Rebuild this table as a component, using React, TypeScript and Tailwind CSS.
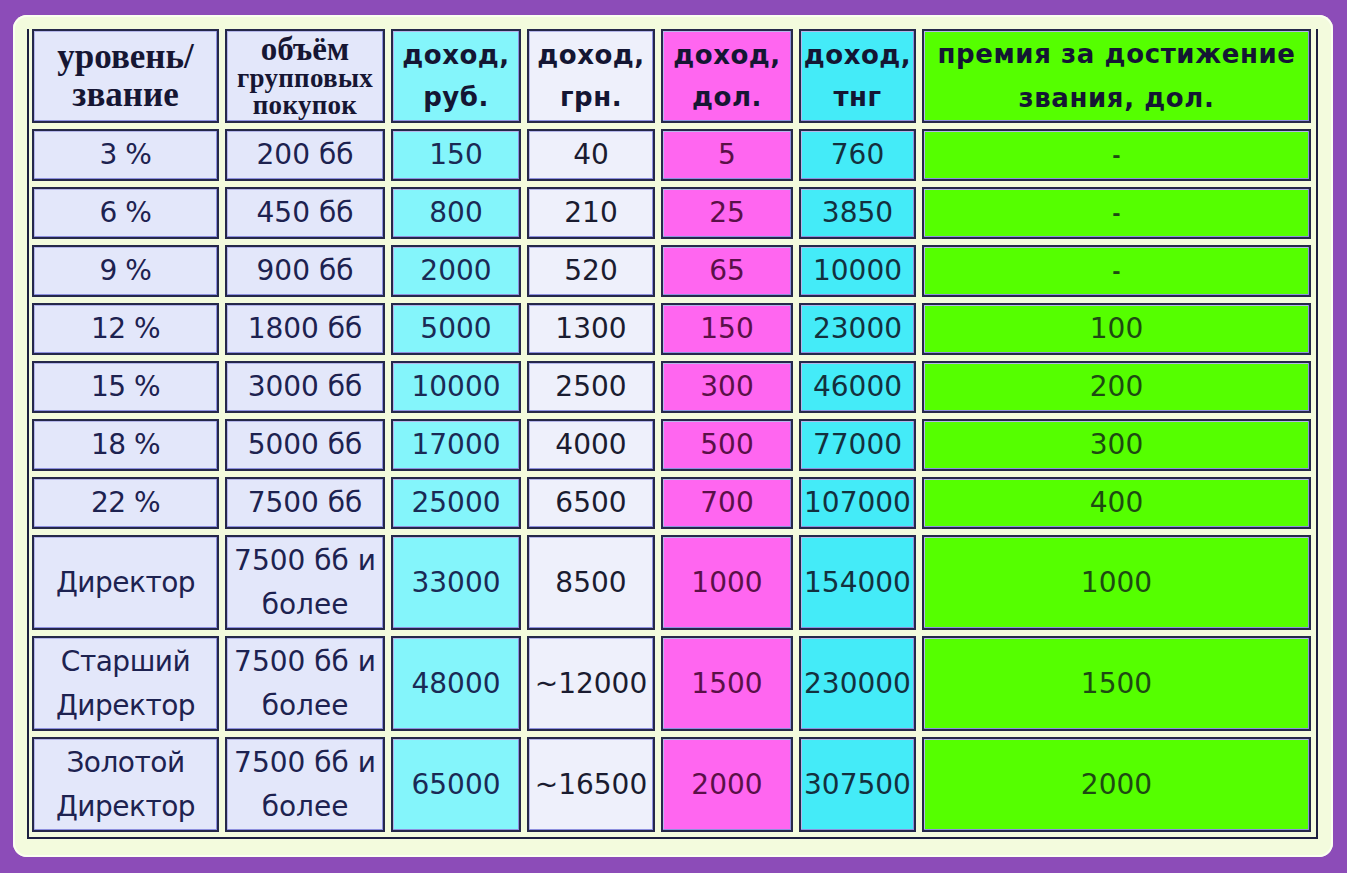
import React from "react";

const cols = [
  { bg: "bg-[#e3e7fa]", text: "text-[#1d2250]" },
  { bg: "bg-[#e3e7fa]", text: "text-[#1d2250]" },
  { bg: "bg-[#84f5fb]", text: "text-[#1a2a55]" },
  { bg: "bg-[#eef0fb]", text: "text-[#1a1c30]" },
  { bg: "bg-[#ff66f0]", text: "text-[#5a1048]" },
  { bg: "bg-[#44ebf8]", text: "text-[#13303e]" },
  { bg: "bg-[#55ff00]", text: "text-[#1d4a12]" },
];

const rows: { h: string; cells: string[][] }[] = [
  { h: "h-[52px]", cells: [["3 %"], ["200 бб"], ["150"], ["40"], ["5"], ["760"], ["-"]] },
  { h: "h-[52px]", cells: [["6 %"], ["450 бб"], ["800"], ["210"], ["25"], ["3850"], ["-"]] },
  { h: "h-[52px]", cells: [["9 %"], ["900 бб"], ["2000"], ["520"], ["65"], ["10000"], ["-"]] },
  { h: "h-[52px]", cells: [["12 %"], ["1800 бб"], ["5000"], ["1300"], ["150"], ["23000"], ["100"]] },
  { h: "h-[52px]", cells: [["15 %"], ["3000 бб"], ["10000"], ["2500"], ["300"], ["46000"], ["200"]] },
  { h: "h-[52px]", cells: [["18 %"], ["5000 бб"], ["17000"], ["4000"], ["500"], ["77000"], ["300"]] },
  { h: "h-[52px]", cells: [["22 %"], ["7500 бб"], ["25000"], ["6500"], ["700"], ["107000"], ["400"]] },
  { h: "h-[95px]", cells: [["Директор"], ["7500 бб и", "более"], ["33000"], ["8500"], ["1000"], ["154000"], ["1000"]] },
  { h: "h-[95px]", cells: [["Старший", "Директор"], ["7500 бб и", "более"], ["48000"], ["~12000"], ["1500"], ["230000"], ["1500"]] },
  { h: "h-[95px]", cells: [["Золотой", "Директор"], ["7500 бб и", "более"], ["65000"], ["~16500"], ["2000"], ["307500"], ["2000"]] },
];

const cellBase =
  "border-2 border-[#25284a] shadow-[inset_-1px_-1px_0_#8d90de,inset_1px_1px_0_#b4b6ea] flex flex-col items-center justify-center text-center";

const sans = { fontFamily: "'DejaVu Sans', Verdana, sans-serif" };
const serif = { fontFamily: "'Liberation Serif', 'Times New Roman', serif" };

function SansHead({ lines, i }: { lines: string[]; i: number }) {
  return (
    <div className={`${cellBase} ${cols[i].bg} h-[94px] text-[#141633] font-bold text-[26px] leading-[42px] tracking-[0.5px]`} style={sans}>
      {lines.map((l, k) => (
        <div key={k}>{l}</div>
      ))}
    </div>
  );
}

export default function App() {
  return (
    <div className="w-[1347px] h-[873px] bg-[#8c4cb8] pt-[15px] pl-[13px]">
      <div className="w-[1320px] h-[842px] bg-[#f3fbdd] rounded-[14px] pt-[14px] pl-[14px] pr-[15px] shadow-[inset_0_0_0_2px_#fbfff0]">
        <div className="border-l-2 border-r-2 border-b-2 border-[#1d2040] pl-[3px] pr-[4px] pb-[5px]">
          <div className="grid grid-cols-[187px_160px_130px_128px_132px_117px_389px] gap-x-[6px] gap-y-[6px]">
            {/* header */}
            <div className={`${cellBase} ${cols[0].bg} h-[94px] text-[#161633] font-bold text-[35px] leading-[38px]`} style={serif}>
              <div>уровень/</div>
              <div>звание</div>
            </div>
            <div className={`${cellBase} ${cols[1].bg} h-[94px] text-[#161633] font-bold`} style={serif}>
              <div className="text-[33px] leading-[32px]">объём</div>
              <div className="text-[27px] leading-[27px] tracking-[0.3px]">групповых</div>
              <div className="text-[27px] leading-[27px] tracking-[0.3px]">покупок</div>
            </div>
            <SansHead lines={["доход,", "руб."]} i={2} />
            <SansHead lines={["доход,", "грн."]} i={3} />
            <SansHead lines={["доход,", "дол."]} i={4} />
            <SansHead lines={["доход,", "тнг"]} i={5} />
            <div className={`${cellBase} ${cols[6].bg} h-[94px] text-[#141633] font-bold text-[26px] leading-[44px] tracking-[0.6px]`} style={sans}>
              <div>премия за достижение</div>
              <div>звания, дол.</div>
            </div>
            {rows.map((r, ri) =>
              r.cells.map((c, ci) => (
                <div
                  key={`${ri}-${ci}`}
                  className={`${cellBase} ${cols[ci].bg} ${cols[ci].text} ${r.h} text-[28px] leading-[44px]`}
                  style={sans}
                >
                  {c.map((l, k) =>
                    l === "-" ? (
                      <div key={k} className="text-[20px] font-bold">-</div>
                    ) : (
                      <div key={k} className={ci === 0 ? "tracking-[-0.5px]" : ""}>{l}</div>
                    )
                  )}
                </div>
              ))
            )}
          </div>
        </div>
      </div>
    </div>
  );
}
